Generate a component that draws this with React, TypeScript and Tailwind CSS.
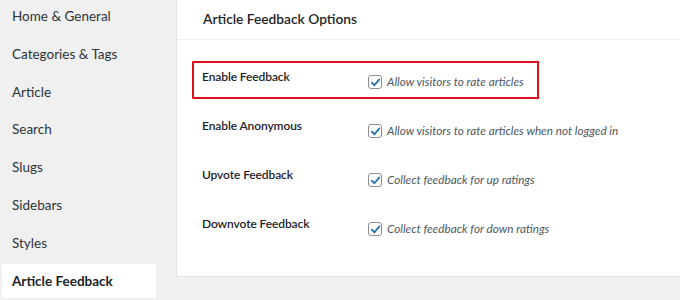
import React from "react";

const navItems = [
  "Home & General",
  "Categories & Tags",
  "Article",
  "Search",
  "Slugs",
  "Sidebars",
  "Styles",
  "Article Feedback",
];

const options = [
  { label: "Enable Feedback", text: "Allow visitors to rate articles", highlight: true },
  { label: "Enable Anonymous", text: "Allow visitors to rate articles when not logged in" },
  { label: "Upvote Feedback", text: "Collect feedback for up ratings" },
  { label: "Downvote Feedback", text: "Collect feedback for down ratings" },
];

function Checkbox() {
  return (
    <span className="flex h-[14px] w-[14px] shrink-0 items-center justify-center rounded-[3px] border border-[#8c8f94] bg-white">
      <svg viewBox="0 0 12 12" className="h-[11px] w-[11px]">
        <path d="M2 6.2 L4.8 9 L10 2.8" fill="none" stroke="#2271b1" strokeWidth="2" strokeLinecap="round" strokeLinejoin="round" />
      </svg>
    </span>
  );
}

export default function App() {
  return (
    <div className="flex h-[300px] w-[680px] overflow-hidden bg-[#f0f0f1] text-[13.5px] text-[#2c3338]" style={{ fontFamily: 'Lato, "Noto Sans", sans-serif' }}>
      <div className="flex w-[176px] shrink-0 flex-col gap-[3.86px] pl-[2px] -mt-px">
        {navItems.map((item) => {
          const active = item === "Article Feedback";
          return (
            <div
              key={item}
              className={`flex h-[34px] w-[154px] shrink-0 items-center pl-[10px] ${active ? "bg-white font-bold text-[#1d2327]" : ""}`}
            >
              {item}
            </div>
          );
        })}
      </div>
      <div className="flex h-[277px] flex-1 flex-col border-l border-b border-[#e4e4e7] bg-white">
        <div className="flex h-[40px] items-center border-b border-[#f0f0f5] pl-[26px] text-[13.75px] font-semibold text-[#1d2327]">
          Article Feedback Options
        </div>
        <div className="mt-[16px] flex flex-col">
          {options.map((o) => (
            <div key={o.label} className="relative flex h-[49px]">
              {o.highlight && (
                <div className="absolute left-[15px] top-[5px] h-[38px] w-[347px] border-2 border-[#e3101c]" />
              )}
              <div className="w-[191px] shrink-0 pl-[25px] pt-[12px] text-[12px] font-semibold tracking-[-0.1px] text-[#1d2327]">{o.label}</div>
              <div className="flex items-start gap-[5px] pt-[17px]">
                <span className="pt-[2px]">
                  <Checkbox />
                </span>
                <span className="text-[11.75px] italic text-[#50575e]">{o.text}</span>
              </div>
            </div>
          ))}
        </div>
      </div>
    </div>
  );
}
